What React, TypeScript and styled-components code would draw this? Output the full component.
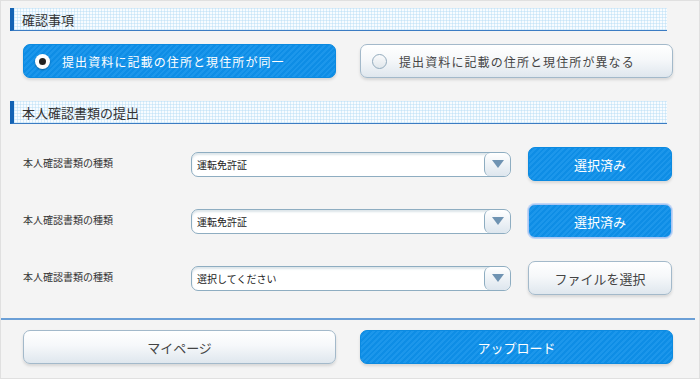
import React from 'react'
import styled, { createGlobalStyle, css } from 'styled-components'

const GlobalStyle = createGlobalStyle`
  html, body {
    margin: 0;
    padding: 0;
    background: #f4f4f4;
  }
  body {
    font-family: "Noto Sans CJK JP", "Noto Sans", sans-serif;
  }
`;

const blueFill = css`
  background-color: #0e90ea;
  background-image: repeating-linear-gradient(
    135deg,
    rgba(255, 255, 255, 0.06) 0 2px,
    rgba(0, 0, 0, 0.02) 2px 4px
  );
  color: #ffffff;
  border: 1px solid #0c8ae0;
`;

const whiteFill = css`
  background: linear-gradient(#ffffff 0%, #f6f8fa 45%, #dfe7ee 100%);
  color: #444;
  border: 1px solid #a3b9ca;
`;

const Frame = styled.div`
  width: 700px;
  height: 379px;
  box-sizing: border-box;
  border: 1px solid #e0e0e0;
  background: #f4f4f4;
  padding-top: 7px;
  display: flex;
  flex-direction: column;
`;

const Section = styled.section`
  padding: 0 32px 0 9px;
`;

const Header = styled.h2`
  margin: 0;
  height: 23px;
  box-sizing: border-box;
  display: flex;
  align-items: center;
  padding-left: 8px;
  border-left: 4px solid #1463b4;
  border-bottom: 1px solid #3b7cc3;
  background-color: #f8fcff;
  background-image: linear-gradient(90deg, rgba(180, 220, 245, 0.45) 1px, transparent 1px),
    linear-gradient(rgba(180, 220, 245, 0.45) 1px, transparent 1px);
  background-size: 3px 3px;
  font-size: 13px;
  font-weight: 400;
  color: #333;
`;

const Choices = styled.div`
  display: grid;
  grid-template-columns: 313px 313px;
  gap: 24px;
  padding-left: 13px;
  margin: 13px 0 23px;
`;

const Choice = styled.button<{ $selected?: boolean }>`
  height: 34px;
  border-radius: 7px;
  display: flex;
  align-items: center;
  gap: 12px;
  padding: 0 0 0 11px;
  font-family: inherit;
  font-size: 12px;
  letter-spacing: 1.1px;
  cursor: pointer;
  box-shadow: 0 2px 3px rgba(0, 0, 0, 0.12);
  ${(p) => (p.$selected ? blueFill : whiteFill)}
`;

const Radio = styled.span<{ $checked?: boolean }>`
  width: 15px;
  height: 15px;
  border-radius: 50%;
  box-sizing: border-box;
  display: flex;
  align-items: center;
  justify-content: center;
  ${(p) =>
    p.$checked
      ? css`
          background: #ffffff;
          box-shadow: 0 1px 2px rgba(0, 0, 0, 0.3);
          &::after {
            content: '';
            width: 7px;
            height: 7px;
            border-radius: 50%;
            background: #222;
          }
        `
      : css`
          background: linear-gradient(#fafbfc, #e1e7ec);
          border: 1px solid #93abbd;
        `}
`;

const Rows = styled.div`
  display: flex;
  flex-direction: column;
  gap: 23px;
  padding: 23px 0 0 13px;
`;

const Row = styled.div`
  display: grid;
  grid-template-columns: 151px 320px 144px;
  column-gap: 17px;
  align-items: center;
  height: 34px;
`;

const Label = styled.span`
  font-size: 10px;
  color: #333;
  align-self: start;
  padding-top: 8px;
`;

const Select = styled.div`
  height: 25px;
  box-sizing: border-box;
  border: 1px solid #8eadc1;
  border-radius: 7px;
  background: #fff;
  box-shadow: inset 0 2px 2px rgba(120, 150, 170, 0.25);
  display: flex;
  align-items: stretch;
  overflow: hidden;
`;

const SelectText = styled.span`
  flex: 1;
  display: flex;
  align-items: center;
  padding-left: 5px;
  font-size: 10px;
  color: #222;
`;

const Arrow = styled.span`
  width: 25px;
  border-left: 1px solid #8eadc1;
  border-radius: 6px;
  background: linear-gradient(#ffffff, #dde6ee);
  display: flex;
  align-items: center;
  justify-content: center;
  &::after {
    content: '';
    border-left: 6px solid transparent;
    border-right: 6px solid transparent;
    border-top: 8px solid #6f93b2;
  }
`;

const Button = styled.button<{ $primary?: boolean; $focused?: boolean }>`
  height: 34px;
  border-radius: 7px;
  font-family: inherit;
  font-size: 13px;
  cursor: pointer;
  padding: 0;
  box-shadow: 0 2px 3px rgba(0, 0, 0, 0.12);
  ${(p) => (p.$primary ? blueFill : whiteFill)}
  ${(p) =>
    p.$focused &&
    css`
      border-color: #a9c6f2;
      box-shadow: 0 0 0 1px #c2d6f5;
    `}
`;

const Divider = styled.hr`
  margin: 23px 4px 0 0;
  border: none;
  height: 2px;
  background: #6b9fd6;
`;

const Footer = styled.div`
  display: grid;
  grid-template-columns: 313px 313px;
  gap: 24px;
  padding: 10px 0 0 22px;
`;

type DocRow = { value: string; done: boolean; focused?: boolean };

const docRows: DocRow[] = [
  { value: '運転免許証', done: true },
  { value: '運転免許証', done: true, focused: true },
  { value: '選択してください', done: false },
];

export default function App() {
  return (
    <>
      <GlobalStyle />
      <Frame>
        <Section>
          <Header>確認事項</Header>
          <Choices>
            <Choice $selected>
              <Radio $checked />
              提出資料に記載の住所と現住所が同一
            </Choice>
            <Choice>
              <Radio />
              提出資料に記載の住所と現住所が異なる
            </Choice>
          </Choices>
          <Header>本人確認書類の提出</Header>
          <Rows>
            {docRows.map((r, i) => (
              <Row key={i}>
                <Label>本人確認書類の種類</Label>
                <Select>
                  <SelectText>{r.value}</SelectText>
                  <Arrow />
                </Select>
                <Button $primary={r.done} $focused={r.focused}>
                  {r.done ? '選択済み' : 'ファイルを選択'}
                </Button>
              </Row>
            ))}
          </Rows>
        </Section>
        <Divider />
        <Footer>
          <Button>マイページ</Button>
          <Button $primary>アップロード</Button>
        </Footer>
      </Frame>
    </>
  );
}
